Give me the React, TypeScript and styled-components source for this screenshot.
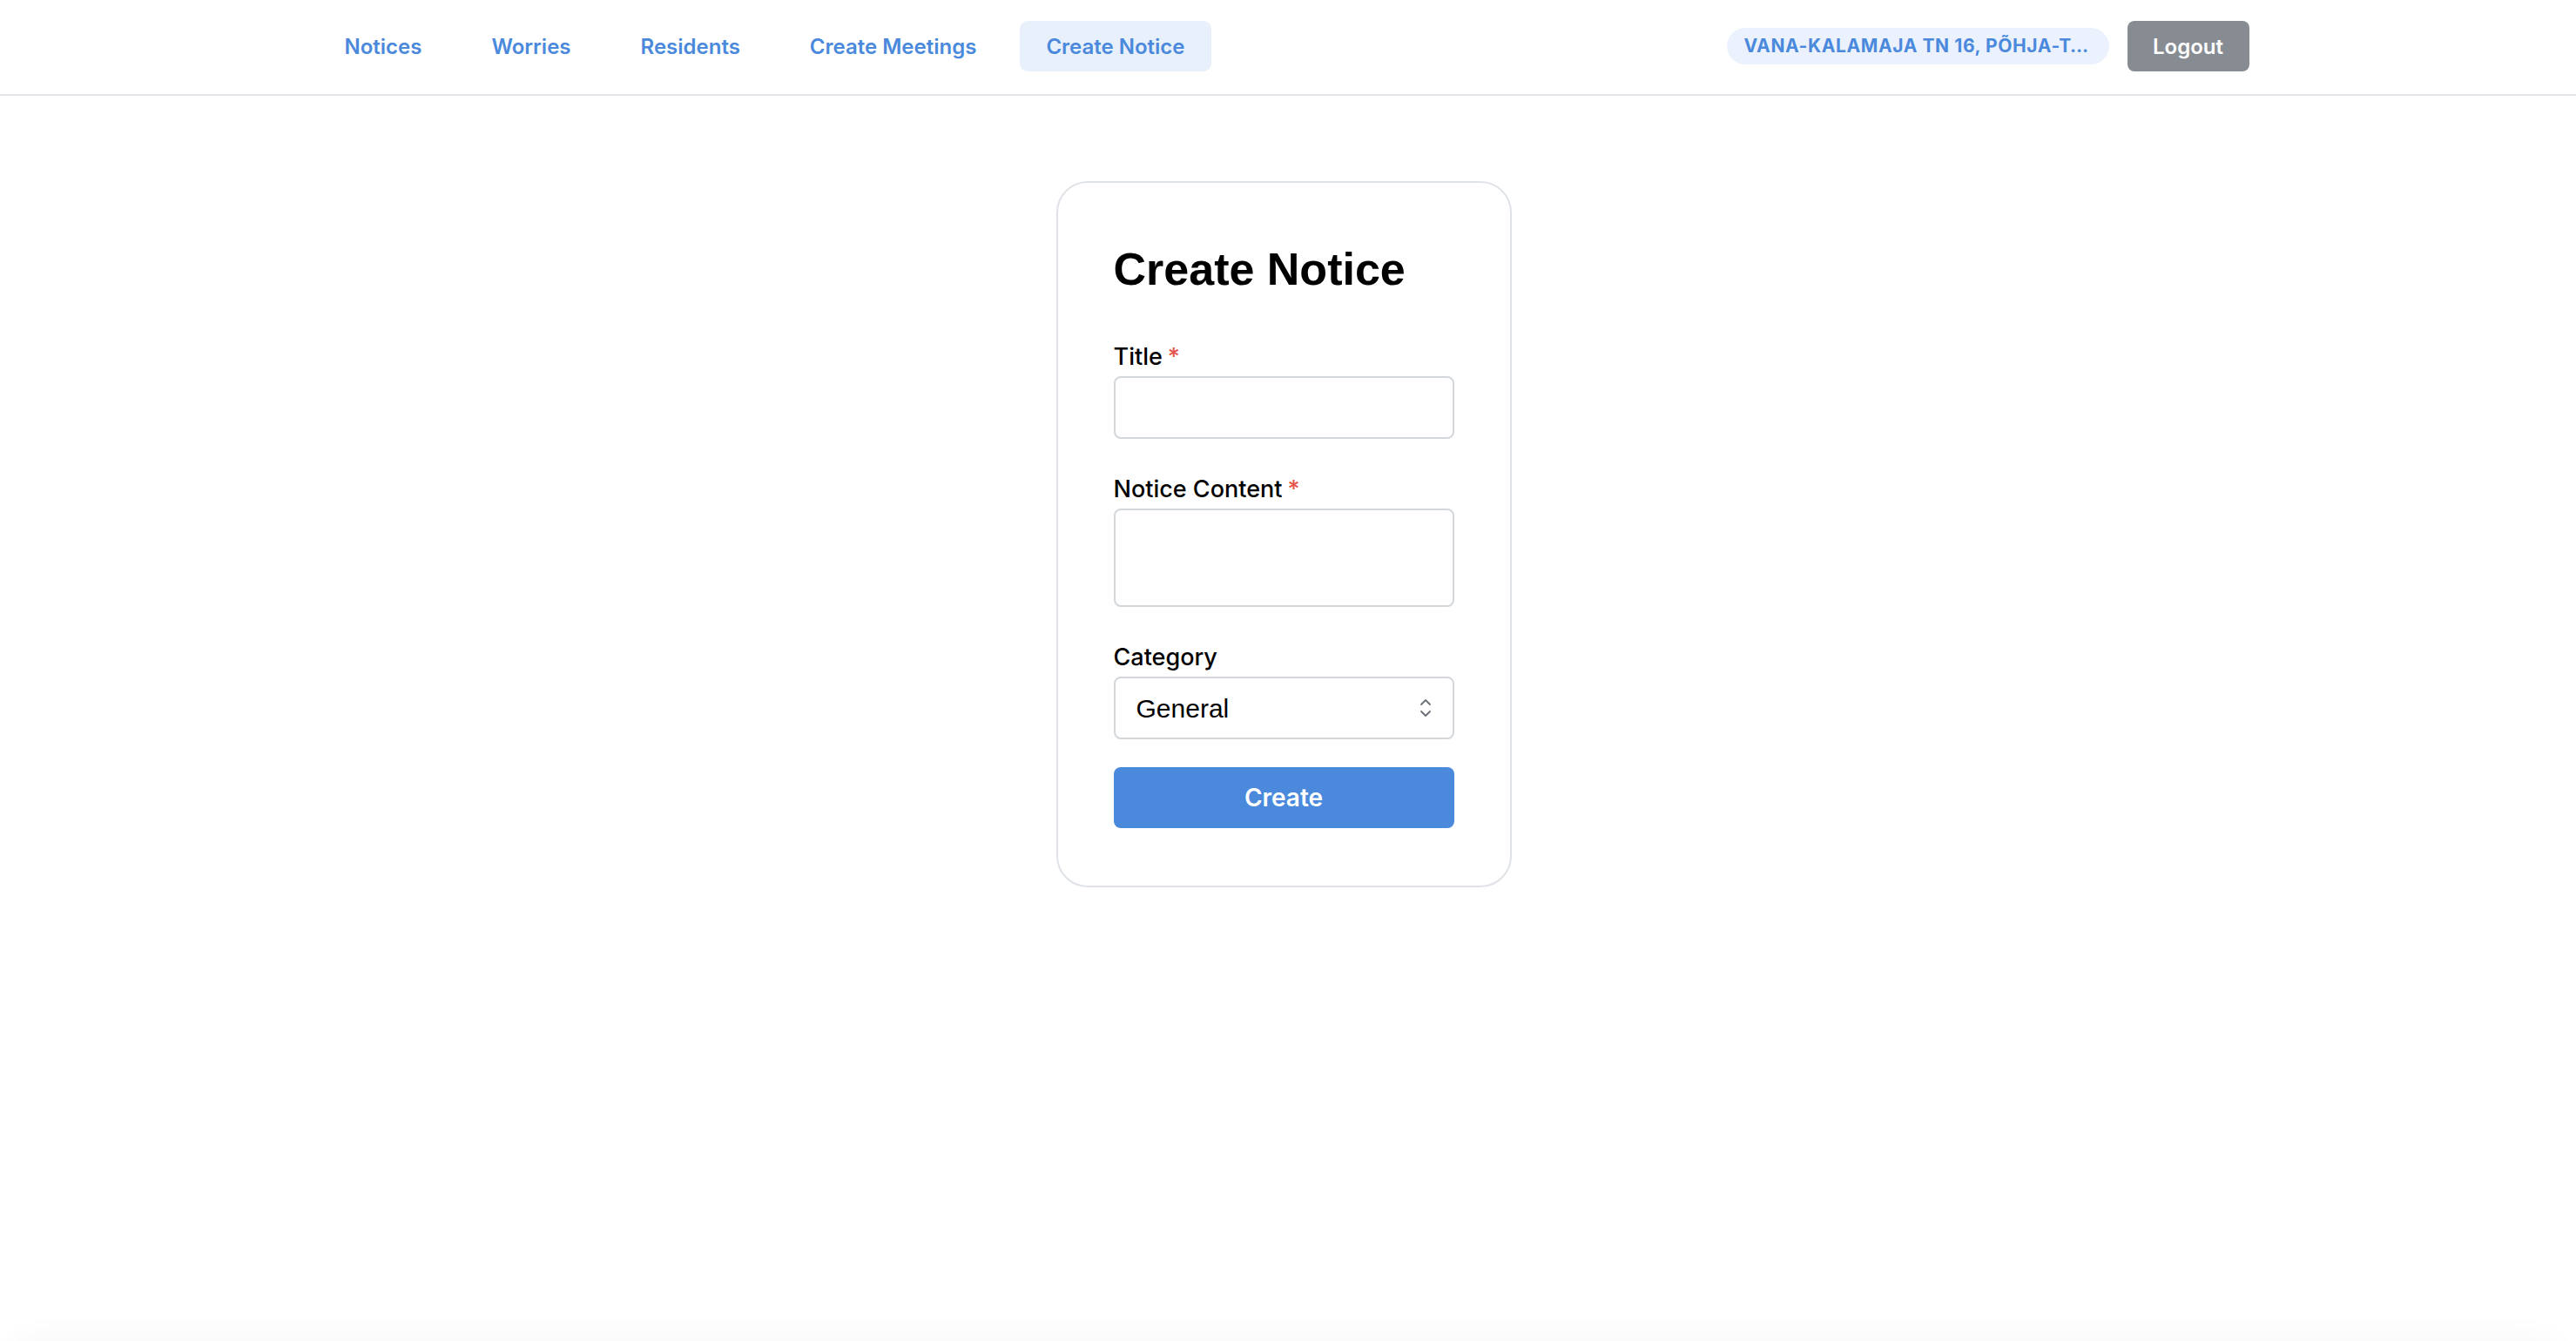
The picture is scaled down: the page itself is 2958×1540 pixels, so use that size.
import * as React from 'react'
import styled, { createGlobalStyle } from 'styled-components'

const { useState } = React

const GlobalStyle = createGlobalStyle`
  html, body {
    margin: 0;
    padding: 0;
    background: #ffffff;
    font-family: Inter, "Noto Sans", "Liberation Sans", sans-serif;
    color: #111;
  }
  * { box-sizing: border-box; }
`

// the original page shows a scrollbar, so the content sits ~5px left of centre
const Page = styled.div`
  min-height: calc(100vh + 80px);
  display: flex;
  flex-direction: column;
  padding-right: 10px;
`

const HeaderBar = styled.header`
  height: 110px;
  margin-right: -10px;
  padding-right: 10px;
  border-bottom: 2px solid #e1e5ea;
  background: #fff;
`

const HeaderInner = styled.div`
  width: 2217px;
  height: 100%;
  margin: 0 auto;
  display: flex;
  align-items: center;
  justify-content: space-between;
  padding-bottom: 2px;
`

const Navi = styled.nav`
  display: flex;
  align-items: center;
  gap: 20px;
`

const NavLink = styled.a<{ $active?: boolean }>`
  height: 58px;
  padding: 0 30px;
  display: flex;
  align-items: center;
  border-radius: 9px;
  font-size: 24px;
  font-weight: 600;
  color: #4a89dc;
  text-decoration: none;
  cursor: pointer;
  background: ${(p) => (p.$active ? '#e8f0fb' : 'transparent')};
`

const RightSide = styled.div`
  display: flex;
  align-items: center;
  gap: 21px;
`

const AddressPill = styled.div`
  width: 439px;
  height: 42px;
  padding: 0 20px;
  border-radius: 21px;
  background: #ebf2fd;
  color: #4a89dc;
  font-size: 21px;
  font-weight: 700;
  letter-spacing: 0.6px;
  line-height: 42px;
  white-space: nowrap;
  overflow: hidden;
`

const LogoutButton = styled.button`
  height: 58px;
  width: 140px;
  border: none;
  border-radius: 8px;
  background: #878c93;
  color: #fff;
  font-family: Inter, "Noto Sans", sans-serif;
  font-size: 24px;
  font-weight: 600;
  cursor: pointer;
`

const Main = styled.main`
  flex: 1;
  display: flex;
  justify-content: center;
  align-items: flex-start;
  padding-top: 98px;
`

const Card = styled.form`
  width: 523px;
  border: 2px solid #dfe3e8;
  border-radius: 36px;
  padding: 68px 64px 66px;
  background: #fff;
`

const Heading = styled.h1`
  margin: 0 0 52px;
  font-family: "Liberation Sans", Arial, sans-serif;
  font-weight: 700;
  font-size: 52px;
  line-height: 62px;
  color: #000;
`

const Field = styled.div`
  margin-bottom: 40px;
`

const Label = styled.label`
  display: block;
  margin-bottom: 4px;
  font-size: 27px;
  font-weight: 450;
  line-height: 36px;
  color: #000;
`

const Required = styled.span`
  color: #e5534b;
  margin-left: 6px;
`

const TextInput = styled.input`
  display: block;
  width: 100%;
  height: 72px;
  border: 2px solid #d3d7dc;
  border-radius: 8px;
  padding: 0 24px;
  font-family: inherit;
  font-size: 28px;
  outline: none;
`

const TextArea = styled.textarea`
  display: block;
  width: 100%;
  height: 113px;
  border: 2px solid #d3d7dc;
  border-radius: 8px;
  padding: 18px 24px;
  font-family: inherit;
  font-size: 28px;
  resize: none;
  outline: none;
`

const SelectWrap = styled.div`
  position: relative;
  height: 72px;
`

const Select = styled.select`
  appearance: none;
  width: 100%;
  height: 100%;
  border: 2px solid #d3d7dc;
  border-radius: 8px;
  padding: 0 24px;
  background: #fff;
  font-family: "Liberation Sans", Arial, sans-serif;
  font-size: 30px;
  color: #000;
  outline: none;
`

const Chevrons = styled.svg`
  position: absolute;
  right: 26px;
  top: 50%;
  transform: translateY(-50%);
  pointer-events: none;
`

const SubmitButton = styled.button`
  display: block;
  width: 100%;
  height: 70px;
  margin-top: -8px;
  border: none;
  border-radius: 8px;
  background: #4a89dc;
  color: #fff;
  font-family: inherit;
  font-size: 28px;
  font-weight: 600;
  cursor: pointer;
`

const Footer = styled.footer`
  height: 80px;
  margin: 0 8px;
  border-radius: 24px 24px 0 0;
  box-shadow: 0 -10px 30px rgba(0, 0, 0, 0.025);
  background: #fff;
`

const navItems = ['Notices', 'Worries', 'Residents', 'Create Meetings', 'Create Notice']

export default function App() {
  const [title, setTitle] = useState('')
  const [content, setContent] = useState('')
  const [category, setCategory] = useState('General')

  return (
    <>
      <GlobalStyle />
      <Page>
        <HeaderBar>
          <HeaderInner>
            <Navi>
              {navItems.map((item) => (
                <NavLink key={item} $active={item === 'Create Notice'}>
                  {item}
                </NavLink>
              ))}
            </Navi>
            <RightSide>
              <AddressPill title="VANA-KALAMAJA TN 16, PÕHJA-TALLINNA LINNAOSA, TALLINN">
                VANA-KALAMAJA TN 16, PÕHJA-T…
              </AddressPill>
              <LogoutButton type="button">Logout</LogoutButton>
            </RightSide>
          </HeaderInner>
        </HeaderBar>
        <Main>
          <Card onSubmit={(e) => e.preventDefault()}>
            <Heading>Create Notice</Heading>
            <Field>
              <Label>
                Title<Required>*</Required>
              </Label>
              <TextInput value={title} onChange={(e) => setTitle(e.target.value)} />
            </Field>
            <Field>
              <Label>
                Notice Content<Required>*</Required>
              </Label>
              <TextArea value={content} onChange={(e) => setContent(e.target.value)} />
            </Field>
            <Field>
              <Label>Category</Label>
              <SelectWrap>
                <Select value={category} onChange={(e) => setCategory(e.target.value)}>
                  <option>General</option>
                  <option>Maintenance</option>
                  <option>Events</option>
                </Select>
                <Chevrons width="14" height="24" viewBox="0 0 14 24" fill="none" stroke="#6b7078" strokeWidth="1.8" strokeLinecap="round" strokeLinejoin="round">
                  <path d="M2 8 L7 3 L12 8" />
                  <path d="M2 16 L7 21 L12 16" />
                </Chevrons>
              </SelectWrap>
            </Field>
            <SubmitButton type="submit">Create</SubmitButton>
          </Card>
        </Main>
        <Footer />
      </Page>
    </>
  )
}
